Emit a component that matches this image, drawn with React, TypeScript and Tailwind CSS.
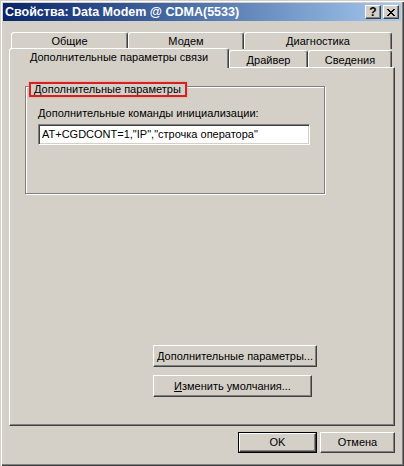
import React from 'react';

const raised =
  'bg-[#d4d0c8] border-t border-l border-t-white border-l-white border-r border-b border-r-[#404040] border-b-[#404040] shadow-[inset_-1px_-1px_0_#808080]';

const Tab: React.FC<{ label: string; width: number; selected?: boolean; className?: string }> = ({
  label,
  width,
  selected,
  className,
}) => (
  <div
    style={{ width }}
    className={`flex justify-center bg-[#d4d0c8] border-t border-l border-t-white border-l-white border-r border-r-[#404040] shadow-[inset_-1px_0_0_#808080] rounded-t-[3px] ${
      selected ? 'h-[20px] pt-[2px] relative z-10' : 'h-[17px] pt-[2px]'
    } ${className ?? ''}`}
  >
    {label}
  </div>
);

const Button: React.FC<{ children: React.ReactNode; className?: string; isDefault?: boolean }> = ({
  children,
  className,
  isDefault,
}) =>
  isDefault ? (
    <div className={`border border-black ${className ?? ''}`}>
      <div className={`${raised} w-full h-full flex items-center justify-center`}>{children}</div>
    </div>
  ) : (
    <div className={`${raised} flex items-center justify-center ${className ?? ''}`}>{children}</div>
  );

export default function App() {
  return (
    <div className="w-[404px] h-[466px] bg-[#d4d0c8] font-['Liberation_Sans',Arial,sans-serif] text-[11px] leading-[13px] text-black overflow-hidden flex flex-col shadow-[inset_1px_1px_0_#d4d0c8,inset_2px_2px_0_#ffffff,inset_-1px_-1px_0_#404040,inset_-2px_-2px_0_#808080]">
      {/* title bar */}
      <div className="mx-[3px] mt-[3px] h-[18px] flex items-center bg-linear-to-r from-[#0a246a] to-[#a6caf0] pl-[2px] pr-[2px]">
        <span className="text-white font-bold text-[12.5px] flex-1">
          Свойства: Data Modem @ CDMA(5533)
        </span>
        <div className={`${raised} w-[16px] h-[14px] flex items-center justify-center font-bold text-[12px] leading-none`}>
          ?
        </div>
        <div className={`${raised} w-[16px] h-[14px] ml-[2px] flex items-center justify-center`}>
          <svg width="8" height="7" viewBox="0 0 8 7" shapeRendering="crispEdges">
            <path d="M0 0h2v1h1v1h2V1h1V0h2v1H7v1H6v1H5v1h1v1h1v1h1v1H6V6H5V5H3v1H2v1H0V6h1V5h1V4h1V3H2V2H1V1H0z" fill="#000" />
          </svg>
        </div>
      </div>

      {/* tab rows */}
      <div className="flex ml-[11px] mt-[11px] h-[16px]">
        <Tab label="Общие" width={117} />
        <Tab label="Модем" width={116} />
        <Tab label="Диагностика" width={148} />
      </div>
      <div className="flex items-start ml-[9px] h-[19px]">
        <Tab label="Дополнительные параметры связи" width={220} selected />
        <Tab label="Драйвер" width={79} className="mt-[2px] pt-[3px]" />
        <Tab label="Сведения" width={84} className="mt-[2px] pt-[3px]" />
      </div>

      {/* panel */}
      <div className="ml-[9px] w-[386px] h-[359px] border-t border-l border-t-white border-l-white border-r border-b border-r-[#404040] border-b-[#404040] shadow-[inset_-1px_-1px_0_#808080] flex flex-col pl-[15px] pt-[18px]">
        <div className="relative w-[300px] h-[108px] border border-[#808080] shadow-[inset_1px_1px_0_#fff,1px_1px_0_#fff] pl-[12px] pt-[20px]">
          <div className="absolute left-[3px] top-[-5px] w-[158px] h-[15px] bg-[#d4d0c8] border-2 border-[#d42222] shadow-[0_0_2px_#f09090] pl-[3px] flex items-center">
            Дополнительные параметры
          </div>
          <div>
            <span className="underline">Д</span>ополнительные команды инициализации:
          </div>
          <div className="mt-[4px] w-[272px] h-[21px] bg-white border-t border-l border-t-[#808080] border-l-[#808080] border-b border-r border-b-white border-r-white shadow-[inset_1px_1px_0_#404040,inset_-1px_-1px_0_#d4d0c8] flex items-center pl-[3px]">
            AT+CGDCONT=1,"IP","строчка оператора"
          </div>
        </div>

        <div className="flex flex-col items-start gap-[8px] ml-[128px] mt-[151px]">
          <Button className="w-[164px] h-[22px]">
            <span>
              <span className="underline">Д</span>ополнительные параметры...
            </span>
          </Button>
          <Button className="w-[159px] h-[22px]">
            <span>
              <span className="underline">И</span>зменить умолчания...
            </span>
          </Button>
        </div>
      </div>

      {/* footer buttons */}
      <div className="flex justify-end gap-[3px] mt-[6px] pr-[9px]">
        <Button isDefault className="w-[79px] h-[21px]">
          OK
        </Button>
        <Button className="w-[75px] h-[21px]">Отмена</Button>
      </div>
    </div>
  );
}
